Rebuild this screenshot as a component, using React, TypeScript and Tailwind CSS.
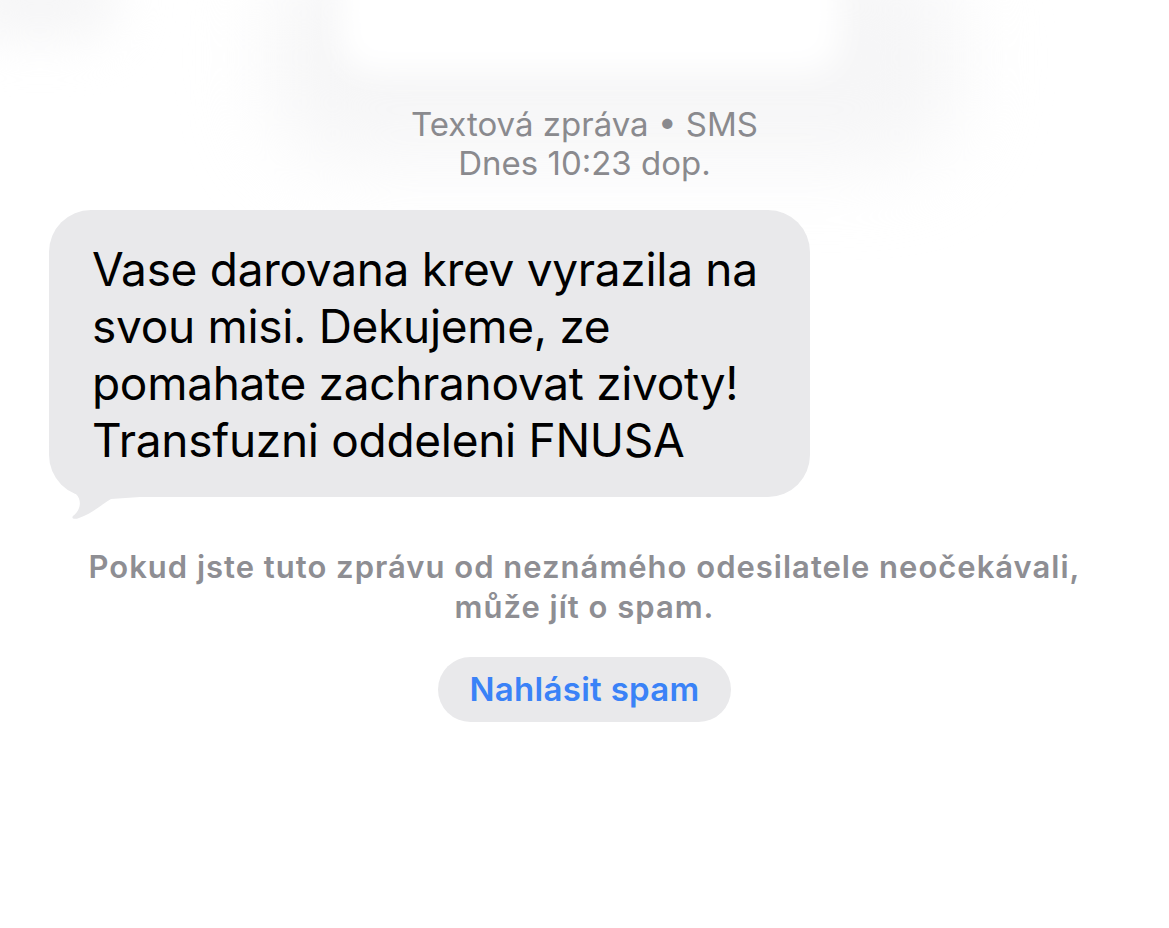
import React from "react";

const font = { fontFamily: "Inter, 'Noto Sans', sans-serif" };

const BubbleTail: React.FC = () => (
  <svg
    className="absolute left-[-9px] bottom-[-23px]"
    width="100"
    height="80"
    viewBox="40 440 100 80"
  >
    <path
      d="M49 440 C50 462 60 482 76 494 C82 500 81 510 73 516 C71 518 74 520 79 518 C91 514 101 505 111 499 L140 497 L140 440 Z"
      fill="#e9e9eb"
    />
  </svg>
);

const App: React.FC = () => {
  return (
    <div className="relative w-full h-[928px] bg-white overflow-hidden" style={font}>
      {/* blurred ghost of the previous message */}
      <div className="absolute left-[270px] top-[-50px] w-[690px] h-[215px] rounded-[80px] bg-[#f6f6f7] blur-2xl" />
      <div className="absolute left-[340px] top-[-40px] w-[500px] h-[112px] rounded-[30px] bg-white blur-lg" />
      <div className="absolute left-[-40px] top-[-40px] w-[160px] h-[80px] rounded-full bg-[#f6f6f7] blur-xl" />

      <div className="relative flex flex-col">
        <div className="mt-[105px] flex flex-col items-center text-[33px] leading-[39px] text-[#8a8a8e]">
          <span>Textová zpráva • SMS</span>
          <span>Dnes 10:23 dop.</span>
        </div>

        <div className="relative ml-[49px] mt-[27px] w-[761px] h-[287px] rounded-[42px] bg-[#e9e9eb] pl-[43px] pt-[31px]">
          <BubbleTail />
          <p className="relative text-[46px] leading-[57px] text-black tracking-[-0.3px]">
            Vase darovana krev vyrazila na
            <br />
            svou misi. Dekujeme, ze
            <br />
            pomahate zachranovat zivoty!
            <br />
            Transfuzni oddeleni FNUSA
          </p>
        </div>

        <p className="mt-[50px] text-center text-[31px] leading-[40px] font-semibold tracking-[1px] text-[#8e8e93]">
          Pokud jste tuto zprávu od neznámého odesilatele neočekávali,
          <br />
          může jít o spam.
        </p>

        <div className="mt-[30px] flex justify-center">
          <button className="w-[293px] h-[65px] rounded-full bg-[#e9e9eb] text-[33px] font-semibold tracking-[0.3px] text-[#3a82f7]">
            Nahlásit spam
          </button>
        </div>
      </div>
    </div>
  );
};

export default App;
